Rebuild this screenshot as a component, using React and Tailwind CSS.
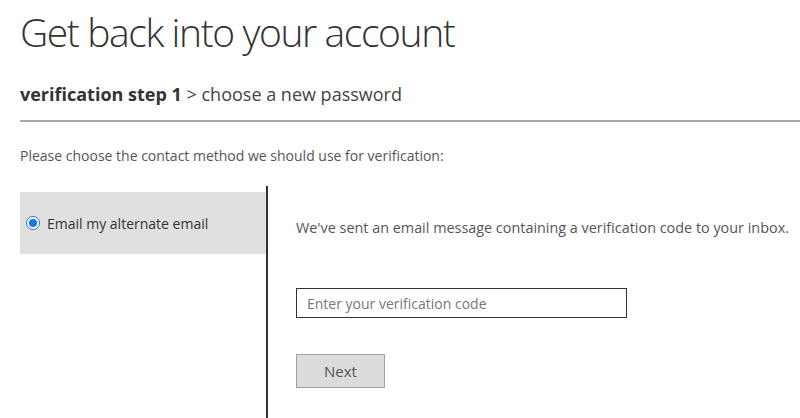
import { useState } from 'react';

const font = { fontFamily: '"Open Sans", "Noto Sans", sans-serif' };

const App = () => {
  const [code, setCode] = useState('');

  return (
    <div className="w-[800px] h-[418px] overflow-hidden bg-white text-[#333]" style={font}>
      {/* Title */}
      <div className="pl-[20px] pt-[8px]">
        <h1 className="text-[39px] font-light leading-[48px] text-[#333] tracking-[-1.4px]">
          Get back into your account
        </h1>
        <div className="mt-[26px] text-[18px] leading-[24px] text-[#444]">
          <span className="font-bold text-[#333]">verification step 1</span> &gt; choose a new password
        </div>
        <div className="mt-[14px] h-[2px] bg-[#a6a6a6]" />
        <p className="mt-[25px] text-[14px] leading-[18px] text-[#555]">
          Please choose the contact method we should use for verification:
        </p>
      </div>

      {/* Method + verification */}
      <div className="mt-[21px] ml-[20px] flex h-[240px]">
        <div className="w-[246px] pt-[6px]">
          <label className="flex items-center gap-[7px] h-[62px] bg-[#e0e0e0] pl-[6px] text-[14px] text-[#333]">
            <span className="w-[14px] h-[14px] rounded-full border border-[#1a73e8] bg-white flex items-center justify-center">
              <span className="w-[8px] h-[8px] rounded-full bg-[#1a73e8]" />
            </span>
            Email my alternate email
          </label>
        </div>
        <div className="w-[2px] bg-[#333]" />
        <div className="pl-[28px] pt-[32px]">
          <p className="text-[14.4px] leading-[20px] text-[#555]">
            We've sent an email message containing a verification code to your inbox.
          </p>
          <input
            value={code}
            onChange={e => setCode(e.target.value)}
            placeholder="Enter your verification code"
            className="mt-[50px] block w-[331px] h-[30px] border border-[#333] px-[10px] text-[14px] text-[#333] placeholder:text-[#777] outline-none"
          />
          <button className="mt-[36px] block w-[89px] h-[34px] bg-[#dcdcdc] border border-[#a0a0a0] text-[15px] text-[#555]">
            Next
          </button>
        </div>
      </div>
    </div>
  );
};

export default App;
